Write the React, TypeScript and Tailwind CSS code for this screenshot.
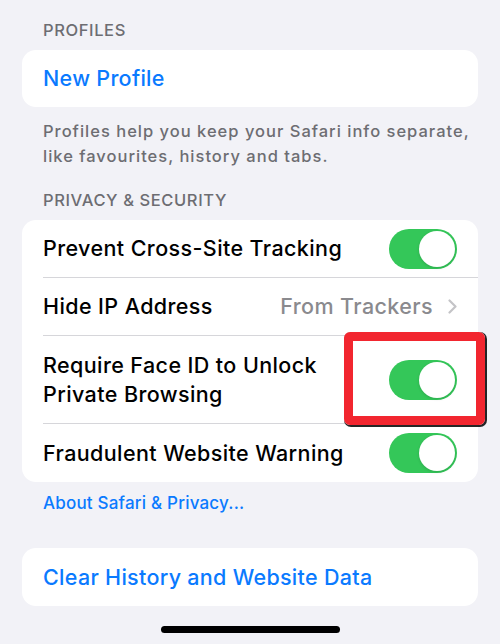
import React from "react";

function Toggle() {
  return (
    <div className="relative h-[40px] w-[68px] shrink-0 rounded-full bg-[#34c759]">
      <div className="absolute right-[2px] top-[2px] h-[36px] w-[36px] rounded-full bg-white shadow-[0_1px_3px_rgba(0,0,0,0.15)]" />
    </div>
  );
}

function Row({
  label,
  right,
  tall,
  last,
}: {
  label: React.ReactNode;
  right: React.ReactNode;
  tall?: boolean;
  last?: boolean;
}) {
  return (
    <div className="pl-[21px]">
      <div
        className={`flex items-center justify-between pr-[21px] ${
          tall ? "h-[88px]" : "h-[58px]"
        } ${last ? "" : "border-b border-[#d6d6da]"}`}
      >
        <div className="text-[21.5px] font-medium leading-[29px] tracking-[0.4px] text-black">
          {label}
        </div>
        {right}
      </div>
    </div>
  );
}

export default function App() {
  return (
    <div
      className="h-[644px] w-[500px] overflow-hidden bg-[#f2f2f7] px-[22px]"
      style={{ fontFamily: "Inter, 'Noto Sans', sans-serif" }}
    >
      <div className="pl-[21px] pt-[19px] text-[16.5px] font-medium leading-[22px] tracking-[0.6px] text-[#6d6d72]">
        PROFILES
      </div>
      <div className="mt-[9px] flex h-[57px] items-center rounded-[14px] bg-white pl-[21px]">
        <span className="text-[21.5px] font-medium tracking-[0.3px] text-[#0a7aff]">
          New Profile
        </span>
      </div>
      <div className="mt-[12px] pl-[21px] text-[16.5px] font-medium leading-[25px] tracking-[1px] text-[#6d6d72]">
        Profiles help you keep your Safari info separate,
        <br />
        like favourites, history and tabs.
      </div>
      <div className="mt-[20px] pl-[21px] text-[16.5px] font-medium leading-[22px] tracking-[0.6px] text-[#6d6d72]">
        PRIVACY &amp; SECURITY
      </div>
      <div className="mt-[9px] rounded-[14px] bg-white">
        <Row label="Prevent Cross-Site Tracking" right={<Toggle />} />
        <Row
          label="Hide IP Address"
          right={
            <div className="flex items-center gap-[15px] text-[21.5px] font-medium tracking-[0.4px] text-[#8a8a8e]">
              <span>From Trackers</span>
              <svg width="9" height="15" viewBox="0 0 9 15" fill="none">
                <path
                  d="M1.5 1.5l6 6-6 6"
                  stroke="#c4c4c7"
                  strokeWidth="2.2"
                  strokeLinecap="round"
                  strokeLinejoin="round"
                />
              </svg>
            </div>
          }
        />
        <Row
          tall
          label={
            <>
              Require Face ID to Unlock
              <br />
              Private Browsing
            </>
          }
          right={
            <div className="relative">
              <Toggle />
              <div className="absolute left-[-45px] top-[-28px] h-[93px] w-[141px] rounded-[6px] border-[9px] border-[#f2262f] shadow-[1px_1px_0_1px_rgba(0,0,0,0.85)]" />
            </div>
          }
        />
        <Row last label="Fraudulent Website Warning" right={<Toggle />} />
      </div>
      <div className="mt-[10px] pl-[21px] text-[17px] font-medium leading-[22px] tracking-[0.2px] text-[#0a7aff]">
        About Safari &amp; Privacy...
      </div>
      <div className="mt-[34px] flex h-[58px] items-center rounded-[14px] bg-white pl-[21px]">
        <span className="text-[21.5px] font-medium tracking-[0.3px] text-[#0a7aff]">
          Clear History and Website Data
        </span>
      </div>
      <div className="mt-[20px] flex justify-center">
        <div className="h-[7px] w-[179px] rounded-full bg-black" />
      </div>
    </div>
  );
}
